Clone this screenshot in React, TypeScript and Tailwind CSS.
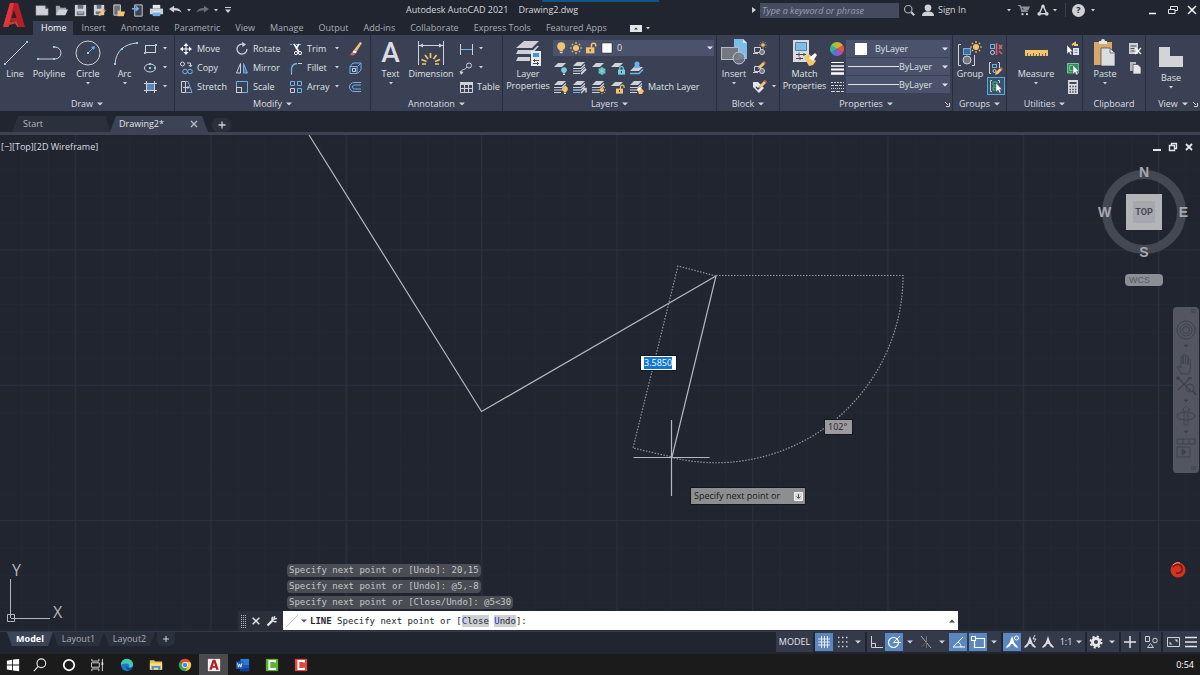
import React, { useState } from 'react';
import clsx from 'clsx';

const G = '#cfd1d6';
const B = '#6fb2e8';
const Y = '#f2c46c';
const D = '#3b4154';

type IconProps = { children: React.ReactNode; box?: number; className?: string };

function Icon({ children, box = 16, className = 'h-4 w-4' }: IconProps) {
  return (
    <svg viewBox={`0 0 ${box} ${box}`} fill="none" className={clsx('shrink-0', className)} aria-hidden="true">
      {children}
    </svg>
  );
}

function Big({ children }: { children: React.ReactNode }) {
  return (
    <Icon box={28} className="h-7 w-7">
      {children}
    </Icon>
  );
}

function Caret({ className = 'text-[#cfd1d6]' }: { className?: string }) {
  return (
    <svg viewBox="0 0 6 4" className={clsx('h-1 w-1.5 shrink-0', className)} aria-hidden="true">
      <path d="M0 0.5h6L3 3.5z" fill="currentColor" />
    </svg>
  );
}

function SmallCaret() {
  return (
    <svg viewBox="0 0 4 3" className="h-[3px] w-1 shrink-0" aria-hidden="true">
      <path d="M0 0h4L2 2.5z" fill={G} />
    </svg>
  );
}

const Dots = ({ at }: { at: [number, number][] }) => (
  <>
    {at.map(([x, y]) => (
      <rect key={`${x}-${y}`} x={x - 1} y={y - 1} width="2" height="2" fill="#8fcbf7" />
    ))}
  </>
);

const Bulb = ({ x, y, color = Y }: { x: number; y: number; color?: string }) => (
  <g transform={`translate(${x} ${y})`}>
    <circle cx="3" cy="3" r="2.8" fill={color} />
    <path d="M1.8 5h2.4v1.6H1.8z" fill={color} />
    <path d="M2 7h2v1H2z" fill={G} />
  </g>
);

const Sun = ({ x, y, s = 1 }: { x: number; y: number; s?: number }) => (
  <g transform={`translate(${x} ${y}) scale(${s})`} stroke={Y} strokeWidth="1.2">
    <circle r="3" fill={Y} stroke="none" />
    <path d="M0-6V-4M0 6V4M-6 0H-4M6 0H4M-4.2-4.2l1.4 1.4M4.2 4.2L2.8 2.8M-4.2 4.2l1.4-1.4M4.2-4.2L2.8-2.8" />
  </g>
);

const Lock = ({ x, y, color, open }: { x: number; y: number; color: string; open?: boolean }) => (
  <g transform={`translate(${x} ${y})`}>
    <path d={open ? 'M4.5 4V2a1.8 1.8 0 0 1 3.6 0v1' : 'M1.7 4V2.4a1.8 1.8 0 0 1 3.6 0V4'} stroke={color} strokeWidth="1.2" />
    <rect y="3.6" width="7" height="5" fill={color} />
    <rect x="3" y="5" width="1" height="2" fill={D} />
  </g>
);

const Sheet = ({ y = 3 }: { y?: number }) => <path d={`M5 ${y}h8l-4 4H1z`} fill={G} />;

const Sheets = ({ top = G }: { top?: string }) => (
  <>
    <path d="M5 2h8L9 6H1z" fill={top} />
    <path d="M1 8.5h8l4-4M1 11h8l4-4M1 13.5h7" stroke={G} strokeWidth="1.1" />
  </>
);

const Pencil = ({ x, y }: { x: number; y: number }) => (
  <g transform={`translate(${x} ${y})`}>
    <path d="M0 7l1-3 4-4 2 2-4 4z" fill={Y} />
    <path d="M5 0l2 2 1-1-2-2z" fill="#e0645a" />
  </g>
);

const Cursor = ({ x, y }: { x: number; y: number }) => (
  <path transform={`translate(${x} ${y})`} d="M0 0v9l2-2 1.6 3 1.4-.7L3.6 6.6H6z" fill="#fff" stroke={D} strokeWidth=".4" />
);

type ToolProps = { icon: React.ReactNode; name: string; label?: string; caret?: boolean; wide?: boolean };

function Tool({ icon, name, label, caret, wide }: ToolProps) {
  return (
    <button aria-label={name} title={name} className={clsx('flex h-[19px] items-center gap-[3px]', wide && 'w-full')}>
      <Icon>{icon}</Icon>
      {label && <span>{label}</span>}
      {caret && (
        <span className={clsx('flex w-2 justify-center', wide && 'ml-auto')}>
          <SmallCaret />
        </span>
      )}
    </button>
  );
}

function BigTool({ icon, lines, caret, className }: { icon: React.ReactNode; lines: string[]; caret?: boolean; className: string }) {
  return (
    <button className={clsx('flex shrink-0 flex-col items-center', className)}>
      {icon}
      <span className="mt-px flex flex-col items-center whitespace-nowrap">
        {lines.map((l) => (
          <span key={l}>{l}</span>
        ))}
      </span>
      {caret && (
        <span className="mt-0.5">
          <SmallCaret />
        </span>
      )}
    </button>
  );
}

type PanelProps = { title: string; className: string; caret?: boolean; launcher?: boolean; children: React.ReactNode };

function Panel({ title, className, caret = true, launcher, children }: PanelProps) {
  return (
    <section className={clsx('relative flex flex-col border-r border-[#292e3b]', className)}>
      <div className="flex h-[62px] items-start pt-1">{children}</div>
      <button className="flex h-3.5 items-center justify-center gap-1 text-[#dcdee3]">
        {title}
        {caret && <Caret />}
      </button>
      {launcher && (
        <svg viewBox="0 0 5 5" className="absolute right-0.5 bottom-1 h-[5px] w-[5px]" aria-hidden="true">
          <path d="M0 0l3 3M4.5 1v3.5H1" stroke={G} fill="none" />
        </svg>
      )}
    </section>
  );
}

/* ---------- Title bar ---------- */

const quickAccess: { name: string; icon: React.ReactNode }[] = [
  { name: 'New', icon: <path d="M1 3h10l3 3v7H1zM11 3v3h3" fill={G} stroke="#8b8f99" strokeWidth=".5" /> },
  {
    name: 'Open',
    icon: (
      <>
        <path d="M2 13V3h4l1 2h6v2" fill="#9fa3ab" />
        <path d="M2 13l3-6h10l-3 6z" fill={G} />
      </>
    ),
  },
  {
    name: 'Save',
    icon: (
      <>
        <path d="M2 2h12v12H2z" fill={G} />
        <path d="M5 2h6v4H5zM4 9h8v4H4z" fill="#6b707b" />
        <path d="M5 10.5h6" stroke={G} />
      </>
    ),
  },
  {
    name: 'Save As',
    icon: (
      <>
        <path d="M2 2h11v11H2z" fill={G} />
        <path d="M5 2h5v4H5zM4 9h6v3H4z" fill="#6b707b" />
        <Pencil x={7} y={7} />
      </>
    ),
  },
  {
    name: 'Open from Web',
    icon: (
      <>
        <path d="M3 2h7v11H3z" fill="#6b707b" stroke={G} />
        <path d="M7 14V8h3l1 1h4l-1.5 5z" fill={Y} />
      </>
    ),
  },
  {
    name: 'Save to Web',
    icon: (
      <>
        <path d="M5 2h8v12H5z" fill="#3c4352" stroke={G} />
        <path d="M2 6h6M6 3.5L8.8 6 6 8.5" stroke={B} strokeWidth="1.6" />
      </>
    ),
  },
  {
    name: 'Plot',
    icon: (
      <>
        <path d="M4 2h8v4H4z" fill="#e7e8ea" />
        <path d="M1 6h14v6H1z" fill={G} />
        <path d="M4 9h8v5H4z" fill={B} />
        <path d="M4 9h8v1H4z" fill="#fff" />
      </>
    ),
  },
  { name: 'Undo', icon: <path d="M1 6.5L6.500 3v2.300c4 0 7 1.200 8 5.200-2-2.200-4.500-2.500-8-2.500v2.200z" fill={G} /> },
];

function TitleBar() {
  return (
    <div className="flex h-5 items-center text-[#d6d8dc]">
      <div className="flex h-[17px] w-[373px] items-center">
        {quickAccess.map((q) => (
          <button key={q.name} aria-label={q.name} className="flex w-[19px] justify-center">
            <Icon className="h-[15px] w-[15px]">{q.icon}</Icon>
          </button>
        ))}
        <button aria-label="Undo list" className="flex w-2 justify-center">
          <SmallCaret />
        </button>
        <button aria-label="Redo" className="flex w-[19px] justify-center">
          <Icon className="h-[15px] w-[15px]">
            <path d="M15 6.5L9.500 3v2.300c-4 0-7 1.200-8 5.200 2-2.200 4.500-2.500 8-2.500v2.200z" fill="#666b76" />
          </Icon>
        </button>
        <button aria-label="Redo list" className="flex w-2 justify-center">
          <SmallCaret />
        </button>
        <button aria-label="Customize Quick Access Toolbar" className="flex w-4 justify-center">
          <svg viewBox="0 0 6 6" className="h-1.5 w-1.5" aria-hidden="true">
            <path d="M0 0h6v1H0zM0 2.500h6L3 6z" fill={G} />
          </svg>
        </button>
      </div>
      <h1 className="flex h-[17px] items-center gap-2.5 whitespace-nowrap">
        <span>Autodesk AutoCAD 2021</span>
        <span>Drawing2.dwg</span>
      </h1>
      <div className="ml-auto flex h-[17px] items-center">
        <svg viewBox="0 0 4 6" className="mr-1 h-1.5 w-1" aria-hidden="true">
          <path d="M0 0l4 3-4 3z" fill={G} />
        </svg>
        <input
          aria-label="Search"
          placeholder="Type a keyword or phrase"
          className="h-[15px] w-[139px] bg-[#454b5e] px-0.5 italic outline-none placeholder:text-[#9a9fac]"
        />
        <button aria-label="Find" className="flex w-5 justify-center">
          <Icon className="h-3 w-3">
            <circle cx="7" cy="7" r="5" stroke="#a9adb7" strokeWidth="1.600" />
            <path d="M11 11l4 4" stroke={G} strokeWidth="2.500" />
          </Icon>
        </button>
        <button className="flex w-[92px] items-center gap-1 pl-[3px]">
          <Icon className="h-3 w-3">
            <circle cx="8" cy="5" r="4.500" fill={G} />
            <path d="M0 16c0-5 4-6 8-6s8 1 8 6z" fill={G} />
          </Icon>
          <span className="whitespace-nowrap">Sign In</span>
          <span className="ml-auto">
            <SmallCaret />
          </span>
        </button>
        <button aria-label="App Store" className="ml-1.5 flex w-3.5 justify-center">
          <Icon className="h-3 w-3">
            <path d="M0 2h3l2 8h8M4 4h11l-2 4H5z" fill="#8d919a" stroke="#8d919a" strokeWidth="1.500" />
            <circle cx="6" cy="13.500" r="1.500" fill={G} />
            <circle cx="12" cy="13.500" r="1.500" fill={G} />
          </Icon>
        </button>
        <button aria-label="Autodesk App" className="ml-1.5 flex w-5 items-center gap-1">
          <Icon className="h-3 w-3">
            <path d="M8 2L3 13M8 2l5 11M3 13h10" stroke={G} strokeWidth="2" />
            <circle cx="8" cy="3" r="2.200" fill={G} />
            <circle cx="3" cy="13" r="2.500" fill={G} />
            <circle cx="13" cy="13" r="2.500" fill={G} />
          </Icon>
          <SmallCaret />
        </button>
        <span className="mr-[5px] ml-2 h-3.5 w-px bg-[#3a404d]" />
        <button aria-label="Help" className="flex w-[26px] items-center gap-1.5 pl-px">
          <span className="flex h-[13px] w-[13px] items-center justify-center rounded-full bg-[#cfd1d6] font-bold text-[#20252f]">?</span>
          <SmallCaret />
        </button>
        <div className="ml-[43px] flex w-[60px] items-center justify-between pr-0.5 pl-1">
          <button aria-label="Minimize" className="flex w-4 justify-center">
            <Icon box={12} className="h-3 w-3">
              <path d="M3 9.500h7" stroke="#fff" strokeWidth="1.500" />
            </Icon>
          </button>
          <button aria-label="Restore" className="flex w-4 justify-center">
            <Icon box={12} className="h-3 w-3">
              <path d="M3.500 5V2.500h7v4H8M1.500 5.500h6.500v4H1.500z" stroke="#e4e5e8" />
            </Icon>
          </button>
          <button aria-label="Close" className="flex w-3 justify-center">
            <Icon box={12} className="h-3 w-3">
              <path d="M2 2l8 8M10 2l-8 8" stroke="#fff" strokeWidth="1.500" />
            </Icon>
          </button>
        </div>
      </div>
    </div>
  );
}

const ribbonTabs = ['Home', 'Insert', 'Annotate', 'Parametric', 'View', 'Manage', 'Output', 'Add-ins', 'Collaborate', 'Express Tools', 'Featured Apps'];

function Header() {
  const [tab, setTab] = useState('Home');
  return (
    <header className="relative flex h-[35px] bg-[#202530]">
      <span className="absolute top-0 left-[542px] h-0.5 w-[117px] bg-[#0f5688]" />
      <button aria-label="Application menu" className="flex w-[33px] items-start pt-0.5">
        <Icon box={28} className="h-7 w-7">
          <path d="M10 1h8l7 24h-6l-1.500-6H10L8.500 25H3z" fill="#b81f25" />
          <path d="M10 1h4L8.500 25H3z" fill="#e2363a" />
          <path d="M14 8l2.500 8h-5z" fill="#202530" />
          <path d="M3 25l5-5 9-1 2 6h-1.500L15 21.500 9 23z" fill="#c93a40" />
        </Icon>
      </button>
      <div className="flex flex-1 flex-col">
        <TitleBar />
        <nav className="flex h-[15px] items-end">
          {ribbonTabs.map((t) => (
            <button
              key={t}
              onClick={() => setTab(t)}
              className={clsx('h-3.5 pr-[7px] pl-2 whitespace-nowrap', t === tab ? 'bg-[#3b4154] text-white' : 'text-[#a9adb7]')}
            >
              {t}
            </button>
          ))}
          <button aria-label="Ribbon display" className="ml-4 flex h-3.5 items-center gap-1">
            <svg viewBox="0 0 12 7" className="h-[7px] w-3" aria-hidden="true">
              <path d="M0 0h12v7H0z" fill="#e4e5e8" />
              <path d="M4 4.500h4L6 2.500z" fill="#333" />
            </svg>
            <SmallCaret />
          </button>
        </nav>
      </div>
    </header>
  );
}

/* ---------- Ribbon ---------- */

function DrawPanel() {
  return (
    <Panel title="Draw" className="w-[175px]">
      <BigTool
        className="w-[30px]"
        lines={['Line']}
        icon={
          <Big>
            <path d="M4 25L26 3" stroke={G} />
            <Dots at={[[4, 25], [26, 3]]} />
          </Big>
        }
      />
      <BigTool
        className="w-[38px]"
        lines={['Polyline']}
        icon={
          <Big>
            <path d="M3 20h17a6 6 0 0 0 0-12h-1" stroke={G} />
            <Dots at={[[3, 20], [19, 20], [19, 8]]} />
          </Big>
        }
      />
      <BigTool
        className="w-10"
        lines={['Circle']}
        caret
        icon={
          <Big>
            <circle cx="14" cy="14" r="12" stroke={G} />
            <path d="M14 14l5-5" stroke={B} />
            <path d="M21 7l-4 1 3 3z" fill={B} />
            <Dots at={[[14, 14]]} />
          </Big>
        }
      />
      <BigTool
        className="w-[33px]"
        lines={['Arc']}
        caret
        icon={
          <Big>
            <path d="M4 25C5 12 13 5 26 4" stroke={G} />
            <Dots at={[[4, 25], [11, 10], [26, 4]]} />
          </Big>
        }
      />
      <div className="pl-px">
        <Tool
          name="Rectangle"
          caret
          icon={
            <>
              <rect x="3.500" y="4.500" width="10" height="7" stroke={G} />
              <Dots at={[[3, 12], [14, 4]]} />
            </>
          }
        />
        <Tool
          name="Ellipse"
          caret
          icon={
            <>
              <ellipse cx="8" cy="8" rx="5.500" ry="4" stroke={G} />
              <Dots at={[[8, 8], [13, 8], [8, 4]]} />
            </>
          }
        />
        <Tool
          name="Hatch"
          caret
          icon={
            <>
              <rect x="4" y="4" width="9" height="8" fill="#5a87b8" />
              <path d="M4.500 2v12M12.500 2v12M2 4.500h13M2 11.500h13" stroke={G} />
            </>
          }
        />
      </div>
    </Panel>
  );
}

function ModifyPanel() {
  return (
    <Panel title="Modify" className="w-[196px]">
      <div className="w-[59px] pl-[3px]">
        <Tool
          name="Move"
          label="Move"
          icon={
            <>
              <path d="M8 4v8M4 8h8" stroke="#fff" />
              <path d="M8 2l2.500 3h-5zM8 14l2.500-3h-5zM2 8l3-2.500v5zM14 8l-3-2.500v5z" fill="#fff" />
            </>
          }
        />
        <Tool
          name="Copy"
          label="Copy"
          icon={
            <>
              <circle cx="4.500" cy="4" r="2" stroke={G} />
              <path d="M9 3h3.500v3M11 5l1.500 2L14 5" stroke={G} />
              <circle cx="7" cy="11.500" r="2.300" stroke={B} />
              <circle cx="12" cy="11.500" r="2.300" stroke={B} />
            </>
          }
        />
        <Tool
          name="Stretch"
          label="Stretch"
          icon={
            <>
              <path d="M3.500 2.500h4v11h-4z" stroke={G} />
              <path d="M8 2.500h2l4 11H8" stroke={B} />
              <path d="M5 8.500h6M9.500 7l1.500 1.500L9.500 10" stroke={G} />
            </>
          }
        />
      </div>
      <div className="w-[54px]">
        <Tool
          name="Rotate"
          label="Rotate"
          icon={
            <>
              <path d="M10 3.500A5 5 0 1 0 13 8" stroke={G} strokeWidth="1.300" />
              <path d="M8 1l4 2.500L8.500 6z" fill={G} />
            </>
          }
        />
        <Tool
          name="Mirror"
          label="Mirror"
          icon={
            <>
              <path d="M6.500 3.500v9.500H2.500z" stroke={G} />
              <path d="M9.500 3.500v9.500h4z" fill="#4b7bab" stroke={B} />
            </>
          }
        />
        <Tool
          name="Scale"
          label="Scale"
          icon={
            <>
              <path d="M2.500 8V2.500h11v11H8" stroke={B} />
              <rect x="2.500" y="8.500" width="5" height="5" stroke={G} />
            </>
          }
        />
      </div>
      <div className="w-[53px]">
        <Tool
          name="Trim"
          label="Trim"
          caret
          wide
          icon={
            <>
              <path d="M2 3.500h11" stroke={B} strokeDasharray="2 1" />
              <path d="M6 3l5 8M11 3L8 8" stroke="#fff" strokeWidth="1.500" />
              <circle cx="8" cy="12" r="1.600" stroke="#fff" />
              <circle cx="12" cy="12" r="1.600" stroke="#fff" />
            </>
          }
        />
        <Tool
          name="Fillet"
          label="Fillet"
          caret
          wide
          icon={
            <>
              <path d="M3.500 13V9A6 6 0 0 1 9 3.500" stroke={B} strokeWidth="1.300" />
              <path d="M10 3.500h4M3.500 13v1.500" stroke={G} />
            </>
          }
        />
        <Tool
          name="Array"
          label="Array"
          caret
          wide
          icon={
            <>
              <path d="M2.500 2.500h4v4h-4zM9.500 2.500h4v4h-4zM9.500 9.500h4v4h-4z" stroke={B} />
              <path d="M2.500 9.500h4v4h-4z" stroke={G} />
            </>
          }
        />
      </div>
      <div className="pl-1.5">
        <Tool
          name="Erase"
          icon={
            <>
              <path d="M13 1l2 1-5 8-3-1z" fill={Y} />
              <path d="M7 9l3 1.500-1.500 2-3.500-1z" fill="#fff" />
              <path d="M5 11l3.500 2-2.500 1.500-3-.5z" fill="#e0645a" />
            </>
          }
        />
        <Tool
          name="Explode"
          icon={
            <>
              <path d="M3 6.500h7v7H3zM3 6.500l3-3.500h8l-3.500 3.500M14 3v7l-3.500 3.500" stroke={B} />
              <path d="M5.500 8.500h3v3h-3z" stroke={G} />
            </>
          }
        />
        <Tool name="Offset" icon={<path d="M14 3.500H7a4.500 4.500 0 0 0 0 9h7M14 6H7.500a2 2 0 0 0 0 4H14" stroke={B} />} />
      </div>
    </Panel>
  );
}

function AnnotationPanel() {
  return (
    <Panel title="Annotation" className="w-[132px]">
      <BigTool
        className="w-[35px] pl-1"
        lines={['Text']}
        caret
        icon={<span className="h-7 font-['Roboto',sans-serif] text-[28px] leading-7 font-medium text-[#dcdde0]">A</span>}
      />
      <BigTool
        className="w-[50px]"
        lines={['Dimension']}
        icon={
          <Big>
            <path d="M1.500 2v24M26.500 2v24M2 6.500h24" stroke={G} />
            <path d="M2 6.500l4-2v4zM26 6.500l-4-2v4z" fill={G} />
            <path d="M13.500 14v5M8 16l3 4M19.500 16l-3 4M4.500 20.500l5 2M23 20.500l-5 2M5 25h4M18 25h4" stroke={Y} strokeWidth="1.700" />
          </Big>
        }
      />
      <div className="pl-0.5">
        <Tool
          name="Linear"
          caret
          icon={
            <>
              <path d="M2.500 3v11M14.500 3v11" stroke={G} />
              <path d="M3 8.500h11" stroke={B} />
            </>
          }
        />
        <Tool
          name="Leader"
          caret
          icon={
            <>
              <path d="M3 13c0-5 4-2 6-6" stroke={G} />
              <circle cx="11" cy="5.500" r="2.500" stroke={G} />
              <path d="M1.500 11l1.500 4 2.500-3z" fill={G} />
            </>
          }
        />
        <Tool
          name="Table"
          label="Table"
          icon={
            <>
              <path d="M2 3h13v3H2z" fill={G} />
              <path d="M2.500 3.500h12v10h-12zM2.500 9.500h12M6.500 6v7.500M10.500 6v7.500" stroke={G} />
            </>
          }
        />
      </div>
    </Panel>
  );
}

function LayersPanel() {
  return (
    <Panel title="Layers" className="w-[214px]">
      <BigTool
        className="w-[50px]"
        lines={['Layer', 'Properties']}
        icon={
          <Big>
            <path d="M10 2h15l-7 7H2z" fill={G} />
            <path d="M4 11h15l4-4h2l-7 8H2zM4 18h12v4H2z" fill={G} />
            <path d="M17 12h10v15H17z" fill="#e9eaec" />
            <path d="M19 14h6v4h-6z" fill="#3f95d8" />
            <path d="M19 21.500h6M19 24.500h6M20.500 20v3M23.500 23v3" stroke="#444a58" />
          </Big>
        }
      />
      <div className="flex-1 pr-0.5">
        <div className="mt-px mb-0.5 flex h-4 items-center bg-[#4a536b] pl-0.5">
          <svg viewBox="0 0 62 16" className="h-4 w-[62px] shrink-0" fill="none" aria-hidden="true">
            <g transform="translate(2 2) scale(1.4)">
              <Bulb x={0} y={0} />
            </g>
            <Sun x={21} y={8} />
            <g transform="translate(31 3) scale(1.2)">
              <Lock x={0} y={0} color={Y} open />
            </g>
            <path d="M47 3h10v10H47z" fill="#fff" stroke="#222" strokeWidth=".5" />
          </svg>
          <select aria-label="Layer" className="flex-1 appearance-none bg-transparent outline-none">
            <option>0</option>
          </select>
          <Caret className="mr-px text-[#e4e5e8]" />
        </div>
        <div className="flex gap-[3px]">
          <Tool name="Off" icon={<><Sheet /><Bulb x={8} y={7} color="#6fd0e0" /></>} />
          <Tool name="Isolate" icon={<><Sheets /><path d="M9 14l5-5" stroke={G} strokeWidth="2" /></>} />
          <Tool name="Freeze" icon={<><Sheet /><circle cx="11" cy="11" r="3.500" fill="#4fb5bb" /><path d="M11 7v8M7.500 9l7 4M14.500 9l-7 4" stroke="#8fe3e3" strokeWidth=".7" /></>} />
          <Tool name="Lock" icon={<><Sheet /><Lock x={8} y={6} color="#6fd0e0" /></>} />
          <Tool name="Make Current" icon={<><path d="M5 7h9l-4 4H1z" fill={G} /><path d="M1 13.500h9l4-4" stroke={B} strokeWidth="1.500" /><circle cx="8" cy="4" r="2.500" fill={B} /><path d="M5 8V6h6v2z" fill={B} /></>} />
        </div>
        <div className="flex gap-[3px]">
          <Tool name="Turn All On" icon={<><Sheets /><Bulb x={9} y={7} /></>} />
          <Tool name="Unisolate" icon={<><Sheets /><path d="M1 11h8M1 13.500h7" stroke={B} /><path d="M9 14l4-4M10 9.500h4v4" stroke={G} strokeWidth="1.500" /></>} />
          <Tool name="Thaw" icon={<><Sheets /><Sun x={11} y={11} s={0.7} /></>} />
          <Tool name="Unlock" icon={<><Sheet /><Lock x={6} y={6} color={Y} open /></>} />
          <Tool name="Match Layer" label="Match Layer" icon={<><Sheets /><path d="M8 10l3-2 4 4-2 3h-3z" fill={Y} /><path d="M8 10l3-2 1.500 1.500-3 2.500z" fill="#fff" /></>} />
        </div>
      </div>
    </Panel>
  );
}

function BlockPanel() {
  return (
    <Panel title="Block" className="w-[63px]">
      <BigTool
        className="w-[34px]"
        lines={['Insert']}
        caret
        icon={
          <Big>
            <path d="M14 0h9l4 4v16H14z" fill="#7dbde9" />
            <path d="M23 0v4h4z" fill="#d5ebfa" />
            <rect x="1.500" y="8.500" width="17" height="12" fill="#737883" stroke="#b6b9c0" />
            <circle cx="19" cy="19" r="6" fill="#737883" fillOpacity=".8" stroke="#c6c8cd" />
          </Big>
        }
      />
      <div>
        <Tool name="Create Block" icon={<><path d="M3.500 6.500h6v5h-6zM2 12.500h5" stroke={G} /><circle cx="11" cy="11" r="2.500" fill="#737883" stroke={G} /><Sun x={12} y={4} s={0.6} /></>} />
        <Tool name="Edit Block" icon={<><path d="M3.500 6.500h6v5h-6zM2 12.500h5" stroke={G} /><circle cx="11" cy="11" r="2.500" fill="#737883" stroke={G} /><Pencil x={7} y={2} /></>} />
        <Tool name="Edit Attributes" caret icon={<><path d="M2 3h5l6 6-5 5-6-6z" fill="#e4e5e8" /><path d="M5 8l2 2 3-3" stroke={D} strokeWidth="1.500" /><Pencil x={8} y={2} /></>} />
      </div>
    </Panel>
  );
}

function PropertySelect({ name, swatch }: { name: string; swatch?: boolean }) {
  return (
    <div className="my-px flex h-[17px] items-center bg-[#4a536b] pr-0.5 pl-0.5">
      {swatch ? <span className="mr-2 ml-[7px] h-3 w-3 shrink-0 bg-white" /> : <span className="h-px w-[51px] shrink-0 bg-[#e4e5e8]" />}
      <select aria-label={name} className="min-w-0 flex-1 appearance-none bg-transparent outline-none">
        <option>ByLayer</option>
      </select>
      <Caret className="text-[#e4e5e8]" />
    </div>
  );
}

function PropertiesPanel() {
  return (
    <Panel title="Properties" className="w-[173px]" launcher>
      <BigTool
        className="w-[49px]"
        lines={['Match', 'Properties']}
        icon={
          <Big>
            <path d="M2 1h16v22H2z" fill="#d9dadd" />
            <path d="M4.500 3.500h11v8h-11z" fill="#7dbde9" stroke="#2e5f8a" strokeWidth=".7" />
            <path d="M5 15.500h10M5 19.500h7M8 13.500v4M13 14v3M9 18v3" stroke="#444a58" />
            <path d="M13 18l5-3 7 7-3 4-4 1z" fill={Y} />
            <path d="M18 19l6-5 2 2-4 6z" fill="#fff" />
          </Big>
        }
      />
      <div className="pr-px">
        <div className="flex h-[19px] w-4 items-center justify-center">
          <svg viewBox="0 0 14 14" className="h-3.5 w-3.5" aria-hidden="true">
            <path d="M7 7V0a7 7 0 0 1 6 3.500z" fill="#e8a33c" />
            <path d="M7 7l6-3.500a7 7 0 0 1 0 7z" fill="#e4573d" />
            <path d="M7 7l6 3.500A7 7 0 0 1 7 14z" fill="#b54bb8" />
            <path d="M7 7v7a7 7 0 0 1-6-3.500z" fill="#4a78d8" />
            <path d="M7 7l-6 3.500a7 7 0 0 1 0-7z" fill="#39b49b" />
            <path d="M7 7L1 3.500A7 7 0 0 1 7 0z" fill="#8cc84b" />
          </svg>
        </div>
        <div className="flex h-[19px] w-4 items-center">
          <Icon>
            <path d="M2 2.500h13" stroke="#fff" />
            <path d="M2 6h13" stroke="#fff" strokeWidth="1.500" />
            <path d="M2 9.500h13" stroke="#fff" strokeWidth="2" />
            <path d="M2 13.500h13" stroke="#fff" strokeWidth="2.500" />
          </Icon>
        </div>
        <div className="flex h-[19px] w-4 items-center">
          <Icon>
            <path d="M2 3.500h13" stroke={G} strokeDasharray="2 1" />
            <path d="M2 6.500h13" stroke={G} strokeDasharray="3 1" />
            <path d="M2 9.500h13" stroke={G} strokeDasharray="1 1" />
            <path d="M2 12.500h13" stroke={G} strokeDasharray="4 1" />
          </Icon>
        </div>
      </div>
      <div className="min-w-0 flex-1 pr-0.5">
        <PropertySelect name="Object Color" swatch />
        <PropertySelect name="Lineweight" />
        <PropertySelect name="Linetype" />
      </div>
    </Panel>
  );
}

function RightPanels() {
  return (
    <>
      <Panel title="Groups" className="w-[54px]">
        <BigTool
          className="w-[34px]"
          lines={['Group']}
          icon={
            <Big>
              <path d="M5 5.500H2.500v21H5M16 26.500h2.500V16" stroke={G} />
              <rect x="7.500" y="9.500" width="7" height="6" fill="#3f6d9a" stroke={B} />
              <circle cx="11" cy="21" r="4" fill="#737883" stroke={G} />
              <Sun x={20} y={8} />
            </Big>
          }
        />
        <div>
          <Tool name="Ungroup" icon={<><rect x="3.500" y="3.500" width="4" height="4" stroke={B} /><circle cx="5.500" cy="11.500" r="2" stroke={G} /><path d="M9.500 2v12M12 4l3 4M15 4l-3 4M12 10l3 3" stroke="#dd6470" strokeWidth="1.500" /></>} />
          <Tool name="Group Edit" icon={<><path d="M4 2.500H2.500v11H4M11 2.500h1.500V8" stroke={G} /><rect x="5.500" y="4.500" width="4" height="3" stroke={B} /><circle cx="7.500" cy="11" r="1.500" stroke={G} /><Pencil x={8} y={8} /></>} />
          <button aria-label="Group Selection" className="flex h-[18px] w-[18px] items-center justify-center border border-[#5fa5d8] bg-[#34536f]">
            <Icon>
              <path d="M4 2.500H2.500v11H4M10 2.500h1.500V5" stroke={G} />
              <path d="M5 4h4v3H5zM5 9h3v3H5z" stroke="#4dbd79" />
              <Cursor x={8} y={5} />
            </Icon>
          </button>
        </div>
      </Panel>
      <Panel title="Utilities" className="w-[76px]">
        <BigTool
          className="w-[58px]"
          lines={['Measure']}
          caret
          icon={
            <Big>
              <path d="M3 11h23v6H3z" fill={Y} />
              <path d="M5.500 14v3M8.500 15v2M11.500 14v3M14.500 15v2M17.500 14v3M20.500 15v2M23.500 14v3" stroke="#7d6334" />
            </Big>
          }
        />
        <div>
          <Tool name="Quick Select" icon={<><path d="M7 4l3-2v2h3" stroke={Y} strokeWidth="2" /><path d="M8 7h6v7H8z" fill="#e4e5e8" /><path d="M9.500 9h3M9.500 11.500h3" stroke="#3f95d8" /><Cursor x={2} y={4} /></>} />
          <Tool name="Select All" icon={<><rect x="2" y="3" width="11" height="10" fill="#2f8f57" /><path d="M4.500 5.500h4v5h-4zM2.500 3.500h11v9.500h-11z" stroke="#8fe0ac" strokeWidth=".7" /><Cursor x={8} y={5} /></>} />
          <Tool name="Quick Calculator" icon={<><path d="M3 1h10v14H3z" fill="#d9dadd" /><path d="M4.500 3h7v2h-7z" fill="#444a58" /><path d="M4.500 7.500h7M4.500 10.500h7M4.500 13h7" stroke="#444a58" strokeWidth="1.500" strokeDasharray="1.500 1.200" /></>} />
        </div>
      </Panel>
      <Panel title="Clipboard" className="w-[63px]" caret={false}>
        <BigTool
          className="w-11"
          lines={['Paste']}
          caret
          icon={
            <Big>
              <path d="M3 3h18v23H3z" fill="#d8a76a" />
              <path d="M8 2h2a2 2 0 0 1 4 0h2v3H8z" fill="#e4e5e8" />
              <path d="M10 9h9l5 5v13H10z" fill="#dcdde0" stroke={D} strokeWidth=".7" />
              <path d="M19 9v5h5" stroke="#7d818b" />
            </Big>
          }
        />
        <div>
          <Tool name="Cut" icon={<><path d="M2 2h9v11H2z" fill={G} /><path d="M3.500 5h6M3.500 7.500h4M3.500 10h4" stroke="#444a58" /><path d="M8 7l6 6M14 7l-6 6" stroke="#fff" strokeWidth="1.300" /></>} />
          <Tool name="Copy Clip" icon={<><path d="M3 2h6v9H3z" fill="#b5b8bf" /><path d="M6 4.500h5l3 3V14H6z" fill="#e4e5e8" stroke={D} strokeWidth=".7" /></>} />
        </div>
      </Panel>
      <Panel title="View" className="flex-1 border-r-0" launcher>
        <BigTool
          className="w-[50px] pt-1"
          lines={['Base']}
          caret
          icon={
            <Big>
              <path d="M2 4h11v9h13v11H2z" fill="#d3d4d8" />
            </Big>
          }
        />
      </Panel>
    </>
  );
}

function DocumentTabs() {
  return (
    <div className="flex h-6 items-end border-b-[3px] border-[#3b4354] bg-[#202530] pl-3 text-[#b4b7bf]">
      <button className="h-4 w-[98px] bg-[#2b303d] pl-[11px] text-left [clip-path:polygon(6px_0,94px_0,100%_100%,0_100%)]">Start</button>
      <div className="flex h-4 w-[98px] items-center bg-[#3b4354] pr-2 pl-[9px] text-[#e4e5e8] [clip-path:polygon(6px_0,92px_0,100%_100%,0_100%)]">
        <button>Drawing2*</button>
        <button aria-label="Close Drawing2" className="ml-auto">
          <Icon box={12} className="h-3 w-3">
            <path d="M3 3l6 6M9 3l-6 6" stroke="#b9bcc4" strokeWidth="1.300" />
          </Icon>
        </button>
      </div>
      <button aria-label="New drawing" className="ml-1 flex h-3.5 w-[19px] items-center justify-center rounded-md bg-[#2b303d]">
        <Icon box={12} className="h-3 w-3">
          <path d="M6 2.500v7M2.500 6h7" stroke={G} strokeWidth="1.300" />
        </Icon>
      </button>
    </div>
  );
}

/* ---------- Drawing area ---------- */

const navIcons = (
  <svg viewBox="0 0 26 166" fill="none" className="h-[166px] w-[26px]" stroke="#3d424d" aria-hidden="true">
    <path d="M18 3h5M18 5h5M18 160h5M18 162h5" />
    <circle cx="13" cy="23" r="9" />
    <circle cx="13" cy="23" r="6" />
    <circle cx="13" cy="23" r="3.500" />
    <path d="M11 38h4l-2 2zM11 93h4l-2 2zM11 124h4l-2 2z" fill="#3d424d" />
    <path d="M8 66c-2-3-4-5-4-6s2-1 4 1V51c0-2 2-2 2 0v6-8c0-2 2.500-2 2.500 0v8-7c0-2 2.500-2 2.500 0v8-5c0-2 2.500-2 2.500 0v7c0 3-1 6-3 7H8z" />
    <path d="M5 71l13 13M17 71L5 83M3 71h4M5 69v4M15 71h4" strokeWidth="1.300" />
    <circle cx="17" cy="81" r="4" />
    <path d="M20 84l3 4" strokeWidth="2" />
    <ellipse cx="13" cy="109" rx="9" ry="4" />
    <path d="M11 118v-15H9l4-4 4 4h-2v15z" />
    <path d="M4 132h18v5H4zM10 132v5M16 132v5M4 140h13v10H4z" />
    <path d="M9 142l4 3-4 3z" fill="#3d424d" />
  </svg>
);

function Canvas() {
  return (
    <main className="relative flex-1 overflow-hidden bg-[#202530]">
      <svg className="absolute inset-0 h-full w-full" fill="none" aria-label="Drawing">
        <defs>
          <pattern id="minor" x="20.800" y="6.500" width="27.080" height="27.080" patternUnits="userSpaceOnUse">
            <path d="M.5 0v28M0 .5h28" stroke="#222834" />
          </pattern>
          <pattern id="major" x="74.900" y="114.300" width="135.400" height="135.400" patternUnits="userSpaceOnUse">
            <path d="M.5 0v136M0 .5h136" stroke="#2a303d" />
          </pattern>
        </defs>
        <rect width="100%" height="100%" fill="url(#minor)" />
        <rect width="100%" height="100%" fill="url(#major)" />
        <path d="M309 0l172.500 276.500L716 141l-44 181" stroke="#b4b7bd" strokeWidth="1.200" />
        <path d="M716 141l-38-10-45 182 39 9M716 140.500h187a187 187 0 0 1-231 182" stroke="#92969e" strokeWidth="1.200" strokeDasharray="1.500 1.500" />
        <path d="M633.500 322.500h76M671.500 285v76" stroke="#b4b7bd" strokeWidth="1.200" />
        <path d="M10.500 444v39M11 483.500h39M7.500 479.500h7v7h-7z" stroke="#b4b7bd" />
        <text x="12" y="441" fill="#b4b7bd" fontSize="16">Y</text>
        <text x="53" y="483" fill="#b4b7bd" fontSize="16">X</text>
        <circle cx="1178" cy="435" r="7.500" fill="#d3341f" />
        <path d="M1173 432c3-4 8-3 9 1s-3 6-6 5" stroke="#7a1710" strokeWidth="1.500" />
        <path d="M1173 430c2-2 4-3 7-2" stroke="#f0a08f" />
      </svg>

      <div className="absolute top-1.5 left-px flex text-[#dcdee3]">
        <button>[−]</button>
        <button>[Top]</button>
        <button>[2D Wireframe]</button>
      </div>

      <div className="absolute top-1.5 right-[5px] flex gap-1">
        <button aria-label="Minimize drawing">
          <Icon box={12} className="h-3 w-3">
            <path d="M2 9h8" stroke="#e4e5e8" strokeWidth="2" />
          </Icon>
        </button>
        <button aria-label="Restore drawing">
          <Icon box={12} className="h-3 w-3">
            <path d="M4.500 4V2.500h5v5H8M2.500 4.500h5v5h-5z" stroke="#e4e5e8" strokeWidth="1.400" />
          </Icon>
        </button>
        <button aria-label="Close drawing">
          <Icon box={12} className="h-3 w-3">
            <path d="M3 3l6 6M9 3l-6 6" stroke="#e4e5e8" strokeWidth="1.800" />
          </Icon>
        </button>
      </div>

      {/* View cube */}
      <div className="absolute top-[29px] right-2 flex flex-col items-center">
        <div className="relative grid h-24 w-24 place-items-center font-['Liberation_Sans',sans-serif] text-sm leading-4 font-bold text-[#a5a8af]">
          <span className="absolute h-[84px] w-[84px] rounded-full border-[9px] border-[#434853]" />
          <button className="relative grid h-9 w-9 place-items-center bg-[#b3b4b8] font-['Roboto',sans-serif] text-[9px] leading-3 text-[#474b55]">
            <span className="grid h-[22px] w-[22px] place-items-center bg-[#a6a8ae]">TOP</span>
          </button>
          <span className="absolute top-0">N</span>
          <span className="absolute bottom-0">S</span>
          <span className="absolute left-0.5">W</span>
          <span className="absolute right-1">E</span>
        </div>
        <button className="mt-3.5 h-3 w-[38px] rounded-sm bg-[#8b8e95] pl-1 text-left font-['Liberation_Sans',sans-serif] text-[#565a64]">WCS</button>
      </div>

      <button aria-label="Navigation bar" className="absolute top-[172px] right-px rounded-sm bg-[#535660]">
        {navIcons}
      </button>

      {/* Dynamic input */}
      <div className="absolute top-[220px] left-[640px] flex h-4 w-[37px] items-center border border-[#14171e] bg-white pl-[3px]">
        <input aria-label="Distance" defaultValue="3.5850" className="h-3 w-7 bg-[#1277d3] text-white outline-none" />
      </div>
      <div className="absolute top-[284px] left-[824px] flex h-4 w-[29px] items-center border border-[#14171e] bg-[#9b9b9d] pl-[3px] text-[#1f2228]">102°</div>
      <div className="absolute top-[352px] left-[690px] flex h-[18px] items-center border border-[#14171e] bg-[#8e8e90] pr-0.5 pl-[3px] whitespace-nowrap text-[#16181d]">
        <span className="w-[100px]">Specify next point or</span>
        <Icon box={9} className="h-[9px] w-[9px]">
          <path d="M.5.5h8v8h-8z" fill="#d9d9db" stroke="#f3f3f3" />
          <path d="M4.500 2v4M2.500 4.500l2 2 2-2" stroke="#555" />
        </Icon>
      </div>

      <CommandLine />
    </main>
  );
}

const history = ['Specify next point or [Undo]: 20,15', 'Specify next point or [Undo]: @5,-8', 'Specify next point or [Close/Undo]: @5<30'];

function CommandLine() {
  return (
    <div className="absolute bottom-0 left-[238px] w-3/5 font-['DejaVu_Sans_Mono',monospace]">
      <ul className="mb-0.5 ml-[49px] flex flex-col items-start gap-[3px] text-[#c3c5c9]">
        {history.map((line) => (
          <li key={line} className="h-[13px] rounded-sm bg-[#4b4d54] px-0.5">
            {line}
          </li>
        ))}
      </ul>
      <div className="flex h-5 items-center bg-[#2a2f3b]">
        <span className="flex w-[45px] shrink-0 items-center gap-[5px] pl-[3px]">
          <svg viewBox="0 0 5 14" className="h-3.5 w-[5px]" aria-hidden="true">
            <path d="M.5 1v13M2.500 1v13M4.500 1v13" stroke="#b4b7bd" strokeDasharray="1 1" />
          </svg>
          <button aria-label="Close command line">
            <Icon box={12} className="h-2.5 w-2.5">
              <path d="M2 2l8 8M10 2l-8 8" stroke="#e4e5e8" strokeWidth="1.800" />
            </Icon>
          </button>
          <button aria-label="Customize">
            <Icon className="h-3 w-3">
              <path d="M2 14l6.500-6.500" stroke="#e4e5e8" strokeWidth="3" />
              <path d="M9 2.500a4 4 0 0 0 5 6M11.500 1.500l-1 4 4-1" stroke="#e4e5e8" strokeWidth="2" />
            </Icon>
          </button>
        </span>
        <div className="flex h-[19px] flex-1 items-center self-start bg-white pr-[3px] text-[#23262d]">
          <Icon className="h-4 w-[18px]">
            <path d="M2 14L14 2" stroke="#c3c6cc" />
          </Icon>
          <Caret className="text-[#555]" />
          <span className="ml-[3px] whitespace-pre">
            <b>LINE</b> Specify next point or [<button className="bg-[#cfd0d3]"><span className="text-[#2b35d0]">C</span>lose</button>{' '}
            <button className="bg-[#cfd0d3]"><span className="text-[#2b35d0]">U</span>ndo</button>]:
          </span>
          <input aria-label="Command" className="min-w-0 flex-1 outline-none" />
          <svg viewBox="0 0 6 4" className="h-1 w-1.5" aria-hidden="true">
            <path d="M0 3.500h6L3 .5z" fill="#444" />
          </svg>
        </div>
      </div>
    </div>
  );
}

/* ---------- Status bar ---------- */

function Toggle({ name, initial = false, children }: { name: string; initial?: boolean; children: React.ReactNode }) {
  const [on, setOn] = useState(initial);
  return (
    <button
      aria-label={name}
      aria-pressed={on}
      onClick={() => setOn(!on)}
      className={clsx('flex h-[18px] w-[18px] items-center justify-center', on && 'bg-[#5a87bf]')}
    >
      <Icon>{children}</Icon>
    </button>
  );
}

const Drop = ({ name }: { name: string }) => (
  <button aria-label={name} className="flex w-3.5 justify-center">
    <Caret />
  </button>
);

const person = 'M8 2l2.500 7 3.500 4-1 1-3-2-1-2H7l-1 2-3 2-1-1 3.500-4z';
const cell = 'flex h-5 items-center bg-[#343a4a]';

function StatusBar() {
  return (
    <footer className="flex h-[23px] items-start justify-between border-t border-[#343b49] bg-[#202530]">
      <nav className="flex pl-[7px] text-[#a9adb7]">
        <button className="h-3.5 w-[46px] bg-[#3b4557] font-bold text-white [clip-path:polygon(0_0,100%_0,41px_100%,5px_100%)]">Model</button>
        <button className="h-3.5 w-[51px] bg-[#2b303d] [clip-path:polygon(0_0,100%_0,46px_100%,5px_100%)]">Layout1</button>
        <button className="h-3.5 w-[51px] bg-[#2b303d] [clip-path:polygon(0_0,100%_0,46px_100%,5px_100%)]">Layout2</button>
        <button aria-label="New layout" className="ml-0.5 flex h-3.5 w-[18px] items-center justify-center rounded-b-md bg-[#2b303d]">
          <Icon box={12} className="h-3 w-3">
            <path d="M6 3v6M3 6h6" stroke={G} />
          </Icon>
        </button>
      </nav>
      <div className="flex gap-0.5">
        <button className={clsx(cell, 'w-[37px] justify-center text-[#e4e5e8]')}>MODEL</button>
        <div className={cell}>
          <Toggle name="Grid" initial>
            <path d="M5.500 2v12M8.500 2v12M11.500 2v12M2 5h12M2 8h12M2 11h12" stroke="#e4e8ee" />
          </Toggle>
          <Toggle name="Snap">
            <path d="M4 3.500h11M4 8h11M4 12.500h11" stroke={G} strokeWidth="1.500" strokeDasharray="1.500 2.500" />
          </Toggle>
          <Drop name="Snap settings" />
        </div>
        <div className={cell}>
          <Toggle name="Ortho">
            <path d="M3.500 2v11.500H15M3.500 9.500h4v4" stroke={G} />
          </Toggle>
          <Toggle name="Polar" initial>
            <circle cx="7.500" cy="8.500" r="5" stroke="#fff" strokeWidth="1.200" />
            <path d="M7.500 8.500L14 2M7.500 8.500H15" stroke="#fff" />
          </Toggle>
          <Drop name="Polar settings" />
          <Toggle name="Isometric">
            <path d="M3 2l10 12" stroke="#a9adb7" />
            <path d="M8.500 2v12" stroke="#5f7a64" />
            <path d="M8.500 8l-5 5" stroke="#805055" />
          </Toggle>
          <Drop name="Isometric settings" />
          <Toggle name="Object Snap Tracking" initial>
            <path d="M13 3L3 13h12M8 8c2 1 3 3 3 5" stroke="#fff" />
          </Toggle>
          <span className="w-0.5" />
          <Toggle name="Object Snap" initial>
            <path d="M6 4.500h8.500v9H4.500V7" stroke="#fff" strokeWidth="1.200" />
            <rect x="1.500" y="2.500" width="4" height="4" stroke="#fff" />
          </Toggle>
          <Drop name="Object Snap settings" />
        </div>
        <div className={cell}>
          <Toggle name="Annotation Visibility" initial>
            <path d={person} fill="#fff" />
            <circle cx="12.500" cy="4" r="2" stroke="#fff" />
          </Toggle>
          <Toggle name="AutoScale">
            <path d={person} fill="#d9dadd" />
            <path d="M13 1l-2 4h3l-2 3" stroke="#d9dadd" />
          </Toggle>
          <Toggle name="Annotation Scale">
            <path d={person} fill="#d9dadd" />
          </Toggle>
          <button className="flex w-7 items-center justify-center gap-1 whitespace-nowrap">
            1:1 <Caret />
          </button>
        </div>
        <div className={cell}>
          <Toggle name="Workspace">
            <circle cx="8" cy="8" r="3.500" stroke="#e4e5e8" strokeWidth="3" />
            <circle cx="8" cy="8" r="5.500" stroke="#e4e5e8" strokeWidth="2" strokeDasharray="2.160 2.160" />
          </Toggle>
          <Drop name="Workspace list" />
        </div>
        <button aria-label="Annotation Monitor" className={clsx(cell, 'w-[18px] justify-center')}>
          <Icon>
            <path d="M8 2v12M2 8h12" stroke="#e4e5e8" strokeWidth="1.500" />
          </Icon>
        </button>
        <button aria-label="Isolate Objects" className={clsx(cell, 'w-5 justify-center')}>
          <Icon>
            <path d="M2.500 2.500h4v5h-4zM7.500 9.500l3 4h-6z" stroke={G} />
            <circle cx="12" cy="6.500" r="2.300" stroke={G} />
          </Icon>
        </button>
        <div className={clsx(cell, 'gap-0.5 pr-px pl-0.5')}>
          <button aria-label="Clean Screen">
            <Icon>
              <path d="M2.500 3.500h12v9h-12z" stroke={G} />
              <path d="M12.500 5.500v3l-3-3zM4.500 10.500v-3l3 3z" fill={G} />
            </Icon>
          </button>
          <button aria-label="Customization">
            <Icon>
              <path d="M2 3.500h12M2 8h12M2 12.500h12" stroke="#e4e5e8" strokeWidth="1.500" />
            </Icon>
          </button>
        </div>
      </div>
    </footer>
  );
}

/* ---------- Windows taskbar ---------- */

function TaskButton({ name, active, children }: { name: string; active?: boolean; children: React.ReactNode }) {
  return (
    <button aria-label={name} className={clsx('flex h-full w-[29px] items-center justify-center', active && 'bg-[#4b4b4d]')}>
      <Icon className="h-3.5 w-3.5">{children}</Icon>
    </button>
  );
}

function Taskbar() {
  return (
    <div className="flex h-[21px] items-center justify-between bg-[#1b1b1b]">
      <div className="flex h-full">
        <button aria-label="Start" className="flex w-[25px] items-center justify-center">
          <Icon className="h-3.5 w-3.5">
            <path d="M1 3l6-1v5.500H1zM8 1.800L15 1v6.500H8zM1 8.500h6V14l-6-1zM8 8.500h7V15l-7-.8z" fill="#fff" />
          </Icon>
        </button>
        <TaskButton name="Search">
          <circle cx="9.500" cy="6" r="5" stroke="#e4e5e8" strokeWidth="1.300" />
          <path d="M6 9.500l-5 5.500" stroke="#e4e5e8" strokeWidth="1.300" />
        </TaskButton>
        <TaskButton name="Cortana">
          <circle cx="8" cy="8" r="6" stroke="#fff" strokeWidth="2" />
        </TaskButton>
        <TaskButton name="Task View">
          <path d="M1 1v2.500h8V1M1 15v-2.500h8V15M.500 5.500h9v5h-9zM13 1v14" stroke="#e4e5e8" />
          <path d="M12 5h2v3h-2z" fill="#e4e5e8" />
        </TaskButton>
        <TaskButton name="Edge">
          <circle cx="8" cy="8" r="7" fill="#1c76c9" />
          <path d="M1 8a7 7 0 0 1 14-.500c0 2.500-2 3.500-5 3.300 1-1.800.5-4.300-2.500-4.600C4.500 6 2 7 1 8z" fill="#45c7b4" />
          <path d="M9 10.800c2 1 4.500.5 5.500-.8-.5 1.500-1.500 3-3 4C8 14 6 11 7.500 8.500c0 1 .5 2 1.500 2.300z" fill="#0f4f94" />
        </TaskButton>
        <TaskButton name="File Explorer">
          <path d="M1 2.500h5l1 1.500h8v9H1z" fill="#f0c04f" />
          <path d="M1 6h14v7.500H1z" fill="#fbdc85" />
          <path d="M3 13.500V9h10v4.500h-2.500V11h-5v2.500z" fill="#3d93d8" />
        </TaskButton>
        <TaskButton name="Chrome">
          <path d="M8 8L1.900 4.500a7 7 0 0 1 12.200 0z" fill="#df4a3b" />
          <path d="M8 8l3.400 2L8 15A7 7 0 0 1 1.900 4.500z" fill="#36a557" />
          <path d="M14.100 4.500H8L11 10 8 15a7 7 0 0 0 6.100-10.500z" fill="#f3c63c" />
          <circle cx="8" cy="8" r="3.300" fill="#fff" />
          <circle cx="8" cy="8" r="2.500" fill="#4285f4" />
        </TaskButton>
        <TaskButton name="AutoCAD" active>
          <path d="M1 1h14v14H1z" fill="#f1f1f1" />
          <path d="M6.500 2h3l4 11.500h-3l-.7-2.300H6.200L5.500 13.500h-3z" fill="#b3202a" />
          <path d="M8 5.500l1.200 3.700H6.800z" fill="#f1f1f1" />
        </TaskButton>
        <TaskButton name="Word">
          <path d="M5 1h10v14H5z" fill="#2b7cd3" />
          <path d="M5 8h10v3.500H5z" fill="#185abd" />
          <path d="M5 11.500h10V15H5z" fill="#103f91" />
          <path d="M0 4h8.500v8.500H0z" fill="#1d5bbf" />
          <path d="M1.800 6l1.100 4.500L4.200 6.800l1.300 3.700L6.700 6" stroke="#fff" />
        </TaskButton>
        <TaskButton name="Camtasia">
          <path d="M1 1h14v14H1z" fill="#58b42c" />
          <path d="M11.500 5V3.500H5v9h6.500V11" stroke="#fff" strokeWidth="2.200" />
        </TaskButton>
        <TaskButton name="Camtasia Recorder">
          <path d="M1 1h14v14H1z" fill="#e2483f" />
          <path d="M11.500 5V3.500H5v9h6.500V11" stroke="#fff" strokeWidth="2.200" />
        </TaskButton>
      </div>
      <time className="pr-1.5 text-white">0:54</time>
    </div>
  );
}

export default function App() {
  return (
    <div className="flex h-screen flex-col overflow-hidden bg-[#202530] font-['Open_Sans',sans-serif] text-[9px] leading-3 text-[#dfe1e5] select-none">
      <Header />
      <div className="flex h-[76px] bg-[#3b4154]">
        <DrawPanel />
        <ModifyPanel />
        <AnnotationPanel />
        <LayersPanel />
        <BlockPanel />
        <PropertiesPanel />
        <RightPanels />
      </div>
      <DocumentTabs />
      <Canvas />
      <StatusBar />
      <Taskbar />
    </div>
  );
}
